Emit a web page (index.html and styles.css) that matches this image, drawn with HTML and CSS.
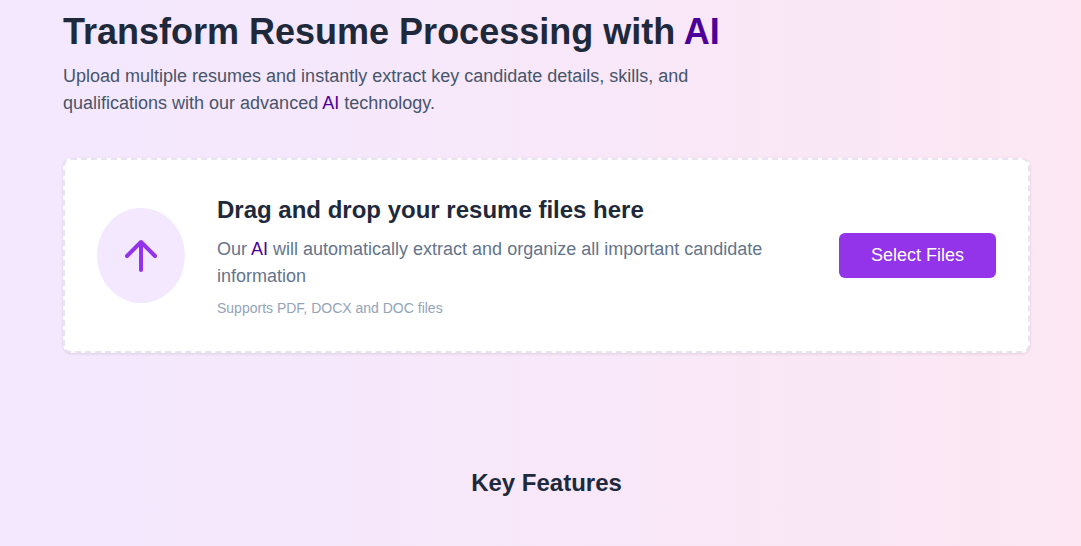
FILE: index.html
```html
<!DOCTYPE html>
<html lang="en">
<head>
<meta charset="utf-8">
<title>Resume Processing</title>
<link rel="stylesheet" href="styles.css">
</head>
<body>
<main class="page">
  <header class="hero">
    <h1 class="hero-title">Transform Resume Processing with <span class="accent">AI</span></h1>
    <p class="hero-text">Upload multiple resumes and instantly extract key candidate details, skills, and qualifications with our advanced <span class="accent">AI</span> technology.</p>
  </header>
  <section class="dropzone">
    <div class="upload-icon">
      <svg width="48" height="48" viewBox="0 0 24 24" fill="none" stroke="currentColor" stroke-width="2" stroke-linecap="round" stroke-linejoin="round" aria-hidden="true"><path d="M12 19V5M5 12l7-7 7 7"/></svg>
    </div>
    <div class="dropzone-body">
      <h2 class="section-title">Drag and drop your resume files here</h2>
      <p class="dropzone-text">Our <span class="accent">AI</span> will automatically extract and organize all important candidate information</p>
      <p class="dropzone-note">Supports PDF, DOCX and DOC files</p>
    </div>
    <button class="select-button" type="button">Select Files</button>
  </section>
  <section class="features">
    <h2 class="section-title">Key Features</h2>
  </section>
</main>
</body>
</html>
```
FILE: styles.css
```css
* {
  box-sizing: border-box;
}

body {
  margin: 0;
  min-height: 100vh;
  font-family: "Liberation Sans", Arial, sans-serif;
  font-size: 18px;
  line-height: 27px;
  color: #1e293b;
  background: linear-gradient(to right, #f3e8ff, #fce7f3);
}

h1, h2, p {
  margin: 0;
}

.page {
  padding: 9px 51px 48px 63px;
}

.hero {
  max-width: 672px;
}

.hero-title {
  margin-bottom: 9px;
  font-size: 36px;
  line-height: 45px;
}

.hero-text {
  color: #475569;
}

.accent {
  color: #4c0099;
}

.dropzone {
  display: flex;
  align-items: center;
  gap: 32px;
  margin-top: 41px;
  padding: 32px;
  border: 2px dashed #e9e2f0;
  border-radius: 8px;
  background: #fff;
  box-shadow: 0 1px 3px rgba(0, 0, 0, 0.1);
}

.upload-icon {
  display: flex;
  align-items: center;
  justify-content: center;
  width: 88px;
  height: 95px;
  border-radius: 50%;
  color: #9333ea;
  background: #f3e8ff;
}

.section-title {
  font-size: 24px;
  line-height: 36px;
}

.dropzone-body {
  flex: 1;
}

.dropzone-text {
  margin-top: 8px;
  color: #64748b;
}

.dropzone-note {
  margin-top: 8px;
  font-size: 14px;
  line-height: 21px;
  color: #94a3b8;
}

.select-button {
  margin-left: 32px;
  padding: 9px 32px;
  border: 0;
  border-radius: 6px;
  font: inherit;
  color: #fff;
  background: #9333ea;
}

.features {
  margin-top: 112px;
  text-align: center;
}
```
